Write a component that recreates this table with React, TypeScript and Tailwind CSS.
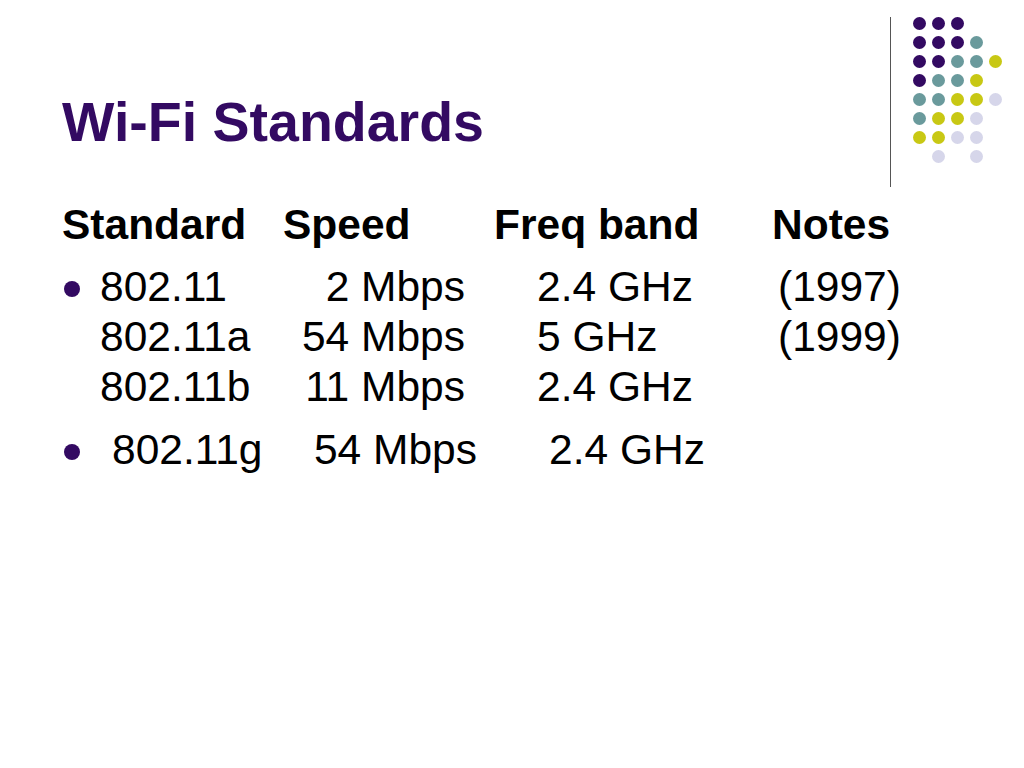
import React from "react";

const P = "bg-[#330a62]";
const T = "bg-[#6a9a9c]";
const Y = "bg-[#c8c814]";
const L = "bg-[#d6d6ea]";

const grid: (string | null)[][] = [
  [P, P, P, null, null],
  [P, P, P, T, null],
  [P, P, T, T, Y],
  [P, T, T, Y, null],
  [T, T, Y, Y, L],
  [T, Y, Y, L, null],
  [Y, Y, L, L, null],
  [null, L, null, L, null],
];

function Decoration() {
  return (
    <div className="flex mt-[17px] mr-[22px]">
      <div className="w-[1px] h-[170px] bg-[#555555]" />
      <div className="ml-[22px] flex flex-col gap-[6px]">
        {grid.map((row, i) => (
          <div key={i} className="flex gap-[6px]">
            {row.map((c, j) => (
              <div
                key={j}
                className={`w-[13px] h-[13px] rounded-full ${c ?? "bg-transparent"}`}
              />
            ))}
          </div>
        ))}
      </div>
    </div>
  );
}

function Row({ a, b, c, d }: { a: string; b: string; c: string; d?: string }) {
  return (
    <div className="flex h-[50px] leading-[50px] whitespace-pre">
      <div className="w-[160px]">{a}</div>
      <div className="w-[205px] text-right">{b}</div>
      <div className="w-[241px] ml-[72px]">{c}</div>
      <div>{d ?? ""}</div>
    </div>
  );
}

function Bullet() {
  return <div className="w-[16px] h-[16px] rounded-full bg-[#330a62] mt-[19px] ml-[2px] mr-[20px] shrink-0" />;
}

export default function App() {
  return (
    <div className="w-[1024px] h-[768px] bg-white overflow-hidden font-['Liberation_Sans',Arial,sans-serif] text-black">
      <div className="flex h-[190px]">
        <h1 className="pl-[62px] pt-[90px] text-[55.5px] leading-[64px] font-bold text-[#330a62]">
          Wi-Fi Standards
        </h1>
        <div className="ml-auto">
          <Decoration />
        </div>
      </div>
      <div className="pl-[62px] mt-[10px] flex h-[50px] leading-[50px] text-[42.5px] font-bold">
        <div className="w-[221px]">Standard</div>
        <div className="w-[211px]">Speed</div>
        <div className="w-[278px]">Freq band</div>
        <div>Notes</div>
      </div>
      <div className="pl-[62px] mt-[12px] text-[42.5px]">
        <div className="flex">
          <Bullet />
          <div className="flex flex-col">
            <Row a="802.11" b="2 Mbps" c="2.4 GHz" d="(1997)" />
            <Row a="802.11a" b="54 Mbps" c="5 GHz" d="(1999)" />
            <Row a="802.11b" b="11 Mbps" c="2.4 GHz" />
          </div>
        </div>
        <div className="flex mt-[13px]">
          <Bullet />
          <div className="flex flex-col pl-[12px]">
            <Row a="802.11g" b="54 Mbps" c="2.4 GHz" />
          </div>
        </div>
      </div>
    </div>
  );
}
